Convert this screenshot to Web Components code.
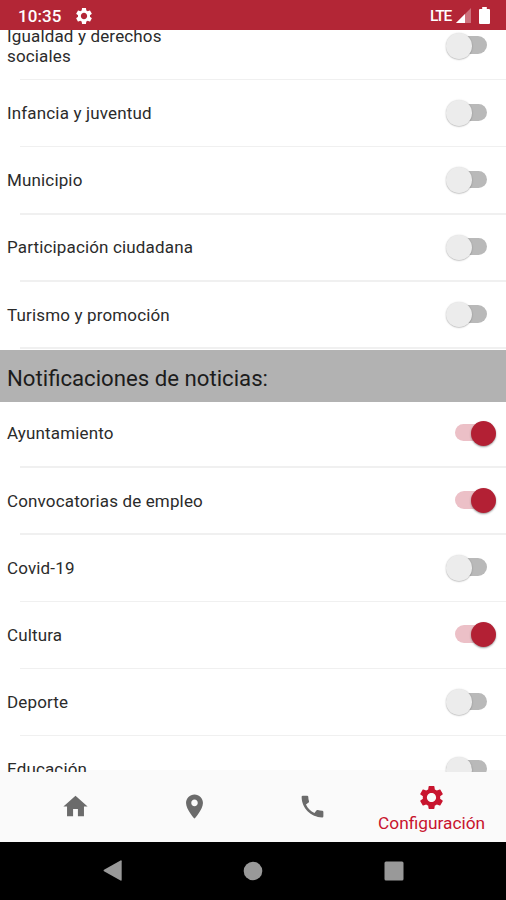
<!DOCTYPE html>
<html lang="es">
<head>
<meta charset="utf-8">
<title>Configuración</title>
<style>
    html, body {
        margin: 0;
        height: 100%;
        overflow: hidden;
        font-family: Roboto, "Liberation Sans", sans-serif;
    }
</style>
</head>
<body>
<settings-app></settings-app>

<script>
const GEAR_PATH = 'M19.14 12.94c.04-.3.06-.61.06-.94 0-.32-.02-.64-.07-.94l2.03-1.58c.18-.14.23-.41.12-.61l-1.92-3.32c-.12-.22-.37-.29-.59-.22l-2.39.96c-.5-.38-1.03-.7-1.62-.94l-.36-2.54c-.04-.24-.24-.41-.48-.41h-3.84c-.24 0-.43.17-.47.41l-.36 2.54c-.59.24-1.13.57-1.62.94l-2.39-.96c-.22-.08-.47 0-.59.22L2.74 8.87c-.12.21-.08.47.12.61l2.03 1.58c-.05.3-.09.63-.09.94s.02.64.07.94l-2.03 1.58c-.18.14-.23.41-.12.61l1.92 3.32c.12.22.37.29.59.22l2.39-.96c.5.38 1.03.7 1.62.94l.36 2.54c.05.24.24.41.48.41h3.84c.24 0 .44-.17.47-.41l.36-2.54c.59-.24 1.13-.56 1.62-.94l2.39.96c.22.08.47 0 .59-.22l1.92-3.32c.12-.22.07-.47-.12-.61l-2.01-1.58zM12 15.8c-2.1 0-3.8-1.7-3.8-3.8s1.7-3.8 3.8-3.8 3.8 1.7 3.8 3.8-1.7 3.8-3.8 3.8z';

const ICONS = {
    home: 'M10 20v-6h4v6h5v-8h3L12 3 2 12h3v8z',
    place: 'M12 2C8.13 2 5 5.13 5 9c0 5.25 7 13 7 13s7-7.75 7-13c0-3.87-3.13-7-7-7zm0 9.7c-1.5 0-2.7-1.2-2.7-2.7s1.2-2.7 2.7-2.7 2.7 1.2 2.7 2.7-1.2 2.7-2.7 2.7z',
    phone: 'M4 3Q3 3 3 4C3 13.4 10.6 21 20 21Q21 21 21 20V16.5Q21 15.5 20 15.5Q18.2 15.5 16.4 14.9Q15.8 14.75 15.4 15.2L13.6 17.4C10.5 16 8 13.5 6.6 10.4L8.8 8.6Q9.25 8.2 9.1 7.6Q8.5 5.8 8.5 4Q8.5 3 7.5 3Z',
    gear: GEAR_PATH
};

class StatusBar extends HTMLElement {
    constructor() {
        super();
        this.attachShadow({ mode: 'open' }).innerHTML = `
            <style>
                :host {
                    display: flex;
                    align-items: center;
                    justify-content: space-between;
                    height: 29.5px;
                    padding: 2px 16px 0 18px;
                    box-sizing: border-box;
                    background: #b32636;
                    color: #fff;
                }
                div { display: flex; align-items: center; }
                svg { display: block; fill: #fff; }
                .time { font-size: 17px; font-weight: 500; letter-spacing: .1px; }
                .gear { margin-left: 12px; }
                .network { font-size: 15.5px; font-weight: 500; letter-spacing: -1.2px; margin-right: 5px; }
                .battery { margin-left: 8px; }
            </style>
            <div>
                <span class="time">10:35</span>
                <svg class="gear" width="20" height="20" viewBox="0 0 24 24"><path d="${GEAR_PATH}"/></svg>
            </div>
            <div>
                <span class="network">LTE</span>
                <svg width="15" height="15" viewBox="0 0 15 15">
                    <path d="M15 0v15H0z" opacity=".35"/>
                    <path d="M9 6v9H0z"/>
                </svg>
                <svg class="battery" width="11" height="17" viewBox="0 0 11 17">
                    <path d="M3.2 0h4.6v2H10q1 0 1 1v13q0 1-1 1H1q-1 0-1-1V3q0-1 1-1h2.2z"/>
                </svg>
            </div>`;
    }
}

class ToggleSwitch extends HTMLElement {
    constructor() {
        super();
        this.attachShadow({ mode: 'open' }).innerHTML = `
            <style>
                :host {
                    display: flex;
                    align-items: center;
                    width: 41px;
                    height: 26px;
                    margin-right: 19px;
                }
                :host([checked]) { margin-right: 10px; }
                .track {
                    flex: none;
                    width: 28px;
                    height: 17.5px;
                    margin: -1.5px 0 0 -13px;
                    border-radius: 9px;
                    background: #b9b9b9;
                    order: 2;
                }
                .thumb {
                    flex: none;
                    width: 25.5px;
                    height: 25.5px;
                    border-radius: 50%;
                    background: #ececec;
                    box-shadow: 0 .5px 1.5px rgba(0, 0, 0, .35);
                    z-index: 1;
                    order: 1;
                }
                :host([checked]) .track {
                    order: 0;
                    margin-left: 0;
                    background: #ecc0c7;
                }
                :host([checked]) .thumb {
                    width: 25px;
                    height: 25px;
                    margin-left: -12px;
                    background: #b32034;
                    box-shadow: 0 1px 2px rgba(0, 0, 0, .4);
                }
            </style>
            <div class="track"></div>
            <div class="thumb"></div>`;
    }
}

class SettingRow extends HTMLElement {
    constructor() {
        super();
        this.attachShadow({ mode: 'open' }).innerHTML = `
            <style>
                :host { display: block; height: 67.2px; flex: none; }
                .row {
                    display: flex;
                    align-items: center;
                    justify-content: space-between;
                    height: 65.7px;
                    padding-left: 7px;
                }
                .label {
                    max-width: 200px;
                    font-size: 17px;
                    line-height: 20px;
                    color: #2b2b2b;
                    letter-spacing: .15px;
                }
                .line { height: 1.5px; margin-left: 20px; background: #f0f0f0; }
            </style>
            <div class="row">
                <span class="label"><slot></slot></span>
                <toggle-switch ${this.hasAttribute('checked') ? 'checked' : ''}></toggle-switch>
            </div>
            <div class="line"></div>`;
    }
}

class SectionHeader extends HTMLElement {
    constructor() {
        super();
        this.attachShadow({ mode: 'open' }).innerHTML = `
            <style>
                :host {
                    display: flex;
                    align-items: center;
                    flex: none;
                    height: 52px;
                    margin: .9px 0 -1.3px;
                    padding: 5px 7px 0;
                    box-sizing: border-box;
                    background: #b2b2b2;
                    color: #1c1c1c;
                    font-size: 22.2px;
                }
            </style>
            <slot></slot>`;
    }
}

class TabItem extends HTMLElement {
    constructor() {
        super();
        this.attachShadow({ mode: 'open' }).innerHTML = `
            <style>
                :host {
                    display: flex;
                    flex-direction: column;
                    align-items: center;
                    justify-content: center;
                    flex: 1 1 0;
                    color: #6b6b6b;
                    font-size: 17.3px;
                    line-height: 20px;
                }
                :host([active]) { color: #c8142e; padding-top: 2px; gap: 1px; }
                svg { display: block; fill: currentColor; }
            </style>
            <svg width="29" height="29" viewBox="0 0 24 24"><path d="${ICONS[this.getAttribute('icon')]}"/></svg>
            <slot></slot>`;
    }
}

class TabBar extends HTMLElement {
    constructor() {
        super();
        this.attachShadow({ mode: 'open' }).innerHTML = `
            <style>
                :host {
                    display: flex;
                    height: 71.5px;
                    padding: 2px 15px 0 16px;
                    box-sizing: border-box;
                    background: #fafafa;
                }
            </style>
            <slot></slot>`;
    }
}

class SystemKeys extends HTMLElement {
    constructor() {
        super();
        this.attachShadow({ mode: 'open' }).innerHTML = `
            <style>
                :host {
                    display: flex;
                    align-items: center;
                    justify-content: space-between;
                    height: 58.5px;
                    padding: 0 102.5px;
                    box-sizing: border-box;
                    background: #000;
                }
                svg { display: block; fill: #999; }
            </style>
            <svg width="20" height="21" viewBox="0 0 20 21"><path d="M1 9.7L17.5.5q1.2-.5 1.2.8v18.4q0 1.3-1.2.8L1 11.3q-1-.8 0-1.6z"/></svg>
            <svg width="20" height="20" viewBox="0 0 20 20"><circle cx="10" cy="10" r="9.3"/></svg>
            <svg width="20" height="20" viewBox="0 0 20 20"><rect x=".5" y=".5" width="19" height="19" rx="1.5"/></svg>`;
    }
}

class SettingsApp extends HTMLElement {
    constructor() {
        super();
        this.attachShadow({ mode: 'open' }).innerHTML = `
            <style>
                :host {
                    display: flex;
                    flex-direction: column;
                    width: 506px;
                    height: 900px;
                    overflow: hidden;
                    background: #fff;
                }
                status-bar, tab-bar, system-keys { flex: none; }
                /* runs 2px over the top edge of the tab bar */
                .list {
                    display: flex;
                    flex-direction: column;
                    flex: 1;
                    min-height: 0;
                    margin-bottom: -2px;
                    overflow: hidden;
                    z-index: 1;
                }
                /* the list is scrolled part of the way into its first row */
                .list setting-row:first-child { margin-top: -16.5px; }
            </style>
            <status-bar></status-bar>
            <div class="list">
                <setting-row>Igualdad y derechos sociales</setting-row>
                <setting-row>Infancia y juventud</setting-row>
                <setting-row>Municipio</setting-row>
                <setting-row>Participación ciudadana</setting-row>
                <setting-row>Turismo y promoción</setting-row>
                <section-header>Notificaciones de noticias:</section-header>
                <setting-row checked>Ayuntamiento</setting-row>
                <setting-row checked>Convocatorias de empleo</setting-row>
                <setting-row>Covid-19</setting-row>
                <setting-row checked>Cultura</setting-row>
                <setting-row>Deporte</setting-row>
                <setting-row>Educación</setting-row>
            </div>
            <tab-bar>
                <tab-item icon="home"></tab-item>
                <tab-item icon="place"></tab-item>
                <tab-item icon="phone"></tab-item>
                <tab-item icon="gear" active>Configuración</tab-item>
            </tab-bar>
            <system-keys></system-keys>`;
    }
}

customElements.define('status-bar', StatusBar);
customElements.define('toggle-switch', ToggleSwitch);
customElements.define('setting-row', SettingRow);
customElements.define('section-header', SectionHeader);
customElements.define('tab-item', TabItem);
customElements.define('tab-bar', TabBar);
customElements.define('system-keys', SystemKeys);
customElements.define('settings-app', SettingsApp);
</script>
</body>
</html>
